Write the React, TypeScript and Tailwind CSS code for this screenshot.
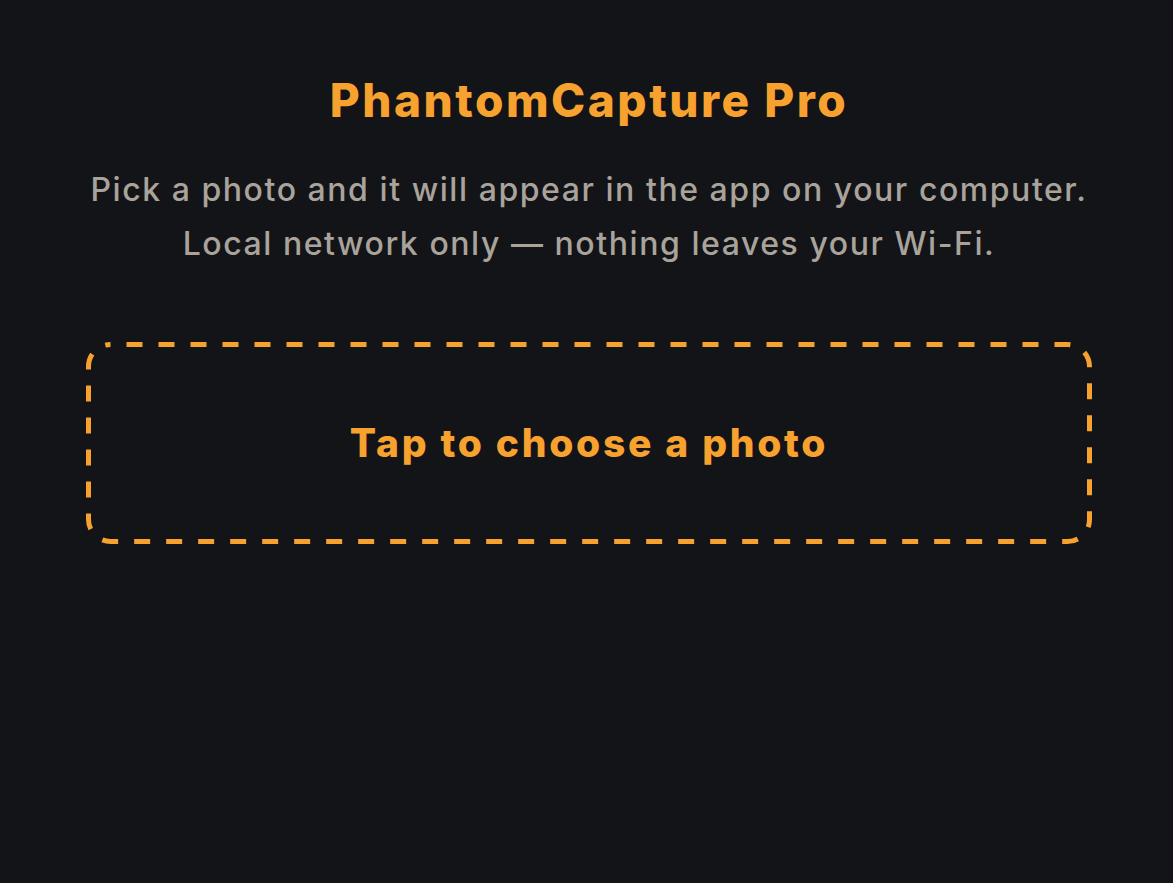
export default function App() {
  return (
    <div
      className="min-h-screen w-full bg-[#131418] flex flex-col items-center pl-[5px]"
      style={{ fontFamily: 'Inter, "Noto Sans", sans-serif' }}
    >
      <h1 className="mt-[72px] text-[46px] leading-[56px] font-extrabold text-[#F7A12F] tracking-[2.5px]">
        PhantomCapture Pro
      </h1>
      <p className="mt-[35px] text-center text-[32px] leading-[54px] font-medium text-[#A9A39B] tracking-[1.55px]">
        Pick a photo and it will appear in the app on your computer.
        <br />
        Local network only — nothing leaves your Wi-Fi.
      </p>
      <button className="relative mt-[71px] w-[1006px] h-[202px] flex items-center justify-center">
        <svg
          className="absolute inset-0 pointer-events-none"
          width="1006"
          height="202"
          viewBox="0 0 1006 202"
          fill="none"
        >
          <rect
            x="2.5"
            y="2.5"
            width="1001"
            height="197"
            rx="22"
            stroke="#F7A12F"
            strokeWidth="5"
            strokeDasharray="16 16"
            strokeDashoffset="16"
          />
        </svg>
        <span className="text-[39px] font-extrabold text-[#F7A12F] tracking-[2.7px]">
          Tap to choose a photo
        </span>
      </button>
    </div>
  );
}
